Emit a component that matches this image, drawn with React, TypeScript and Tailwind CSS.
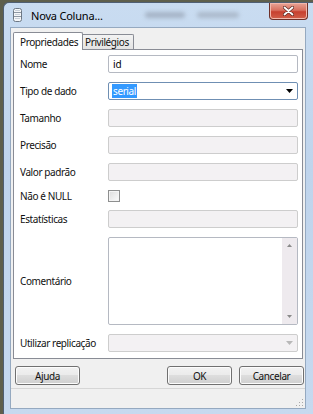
import React from "react"

const font = { fontFamily: '"Noto Sans", "Open Sans", sans-serif' }

const Label = ({ children }: { children: React.ReactNode }) => (
  <div className="w-[88px] shrink-0 text-[10px] tracking-[-0.4px] text-[#111] leading-none">{children}</div>
)

const Disabled = ({ arrow }: { arrow?: boolean }) => (
  <div className="flex-1 h-[18px] rounded-[2px] border border-[#cdcdcd] bg-[#f3f1f3] flex items-center justify-end pr-[4px]">
    {arrow && (
      <svg width="7" height="4" viewBox="0 0 7 4">
        <path d="M0 0h7L3.5 4z" fill="#b8b8b8" />
      </svg>
    )}
  </div>
)

const Row = ({ label, children, h = "h-[18px]" }: { label: string; children: React.ReactNode; h?: string }) => (
  <div className={`flex items-center ${h}`}>
    <Label>{label}</Label>
    {children}
  </div>
)

const WinButton = ({ children }: { children: React.ReactNode }) => (
  <button className="w-[65px] h-[19px] rounded-[3px] border border-[#707070] bg-[linear-gradient(#f2f2f2,#ebebeb_45%,#dddddd_50%,#cfcfcf)] text-[10px] tracking-[-0.4px] text-[#111] leading-none shadow-[inset_0_0_0_1px_#fcfcfc]">
    {children}
  </button>
)

export default function App() {
  return (
    <div className="w-[313px] h-[414px] overflow-hidden bg-[#5e5f4c]" style={font}>
      <div className="ml-[3px] mt-[2px] w-[311px] h-[413px] rounded-tl-[6px] border-l border-t border-[#4f5f74] bg-[linear-gradient(#c9dcf1,#bfd4ec_40%,#c6d9ef)] flex flex-col">
        {/* title bar */}
        <div className="relative h-[24px] flex items-start shrink-0">
          <div className="flex items-center h-[22px] pl-[9px] pt-[2px] gap-[9px]">
            <svg width="9" height="14" viewBox="0 0 9 14">
              <rect x="0.5" y="0.5" width="8" height="13" rx="2" fill="#f4f6f8" stroke="#6d7885" />
              <path d="M1 4.5h7M1 8.5h7" stroke="#8d97a3" />
              <rect x="2" y="2" width="5" height="1" fill="#c9d1da" />
              <rect x="2" y="6" width="5" height="1" fill="#c9d1da" />
              <rect x="2" y="10" width="5" height="1" fill="#c9d1da" />
            </svg>
            <span className="text-[11px] tracking-[-0.2px] text-black leading-none">Nova Coluna...</span>
          </div>
          <div className="flex gap-[12px] mt-[9px] ml-[42px] opacity-60 blur-[2px]">
            <span className="w-[40px] h-[6px] rounded-full bg-[#8d98a8]" />
            <span className="w-[42px] h-[6px] rounded-full bg-[#98a3b2]" />
          </div>
          <div className="ml-auto mr-[6px] w-[39px] h-[17px] rounded-b-[4px] border border-t-0 border-[#6e3028] bg-[linear-gradient(#e9a597,#d8705f_45%,#c7402f_55%,#d1604a)] flex items-center justify-center shadow-[inset_0_0_0_1px_#f2b8ac]">
            <svg width="11" height="10" viewBox="0 0 11 10">
              <path d="M1.5 1.5l8 7M9.5 1.5l-8 7" stroke="#5a2a24" strokeWidth="3.2" strokeLinecap="round" />
              <path d="M1.5 1.5l8 7M9.5 1.5l-8 7" stroke="#ffffff" strokeWidth="1.8" strokeLinecap="round" />
            </svg>
          </div>
        </div>

        {/* client area */}
        <div className="ml-[6px] w-[296px] h-[382px] border border-[#95a9c0] bg-[#f0f0f0] flex flex-col">
          <div className="pl-[2px] pt-[3px]">
            {/* tabs */}
            <div className="flex items-end h-[18px] relative z-10">
              <div className="w-[70px] h-[18px] -mb-px border border-b-0 border-[#898c95] bg-white rounded-t-[2px] flex items-center pl-[6px] text-[10px] tracking-[-0.4px] leading-none text-[#111]">
                Propriedades
              </div>
              <div className="w-[51px] h-[15px] border border-l-0 border-b-0 border-[#898c95] bg-[linear-gradient(#f3f3f3,#e3e3e3)] rounded-tr-[2px] flex items-center pl-[2px] text-[10px] tracking-[-0.4px] leading-none text-[#111]">
                Privilégios
              </div>
            </div>
            {/* panel */}
            <div className="w-[290px] h-[310px] border border-[#898c95] bg-white pl-[6px] pr-[4px] pt-[5px] flex flex-col gap-[9px]">
              <Row label="Nome">
                <div className="flex-1 h-[18px] rounded-[2px] border border-[#b5b9c2] bg-white flex items-center pl-[4px] text-[10px] leading-none text-black">
                  id
                </div>
              </Row>
              <Row label="Tipo de dado">
                <div className="flex-1 h-[18px] rounded-[2px] border border-[#6f8fb3] bg-white flex items-center pl-[3px] pr-[4px]">
                  <span className="bg-[#3399ff] text-white text-[10px] tracking-[-0.4px] leading-none px-[1px] py-[2px]">serial</span>
                  <svg className="ml-auto" width="7" height="4" viewBox="0 0 7 4">
                    <path d="M0 0h7L3.5 4z" fill="#000" />
                  </svg>
                </div>
              </Row>
              <Row label="Tamanho">
                <Disabled />
              </Row>
              <Row label="Precisão">
                <Disabled />
              </Row>
              <Row label="Valor padrão">
                <Disabled />
              </Row>
              <Row label="Não é NULL" h="h-[11px]">
                <div className="w-[12px] h-[12px] border border-[#8e8f8f] bg-[linear-gradient(135deg,#dcdcdc,#fbfbfb)] shadow-[inset_0_0_0_1px_#f4f4f4]" />
              </Row>
              <Row label="Estatísticas">
                <Disabled />
              </Row>
              <Row label="Comentário" h="h-[88px]">
                <div className="flex-1 h-[88px] rounded-[2px] border border-[#b5b9c2] bg-white flex justify-end">
                  <div className="w-[15px] h-full bg-[#eeeaee] flex flex-col items-center justify-between py-[6px]">
                    <svg width="5" height="3" viewBox="0 0 5 3">
                      <path d="M0 3h5L2.5 0z" fill="#8a8a8a" />
                    </svg>
                    <svg width="5" height="3" viewBox="0 0 5 3">
                      <path d="M0 0h5L2.5 3z" fill="#8a8a8a" />
                    </svg>
                  </div>
                </div>
              </Row>
              <Row label="Utilizar replicação">
                <Disabled arrow />
              </Row>
            </div>
          </div>

          {/* buttons */}
          <div className="flex items-center pl-[4px] pr-[1px] mt-[7px]">
            <WinButton>Ajuda</WinButton>
            <div className="ml-auto flex gap-[7px]">
              <WinButton>OK</WinButton>
              <WinButton>Cancelar</WinButton>
            </div>
          </div>

          {/* status bar */}
          <div className="mt-[3px] flex-1 border-t border-[#d6d6d6] flex items-end justify-end pr-[1px] pb-[1px]">
            <svg width="8" height="8" viewBox="0 0 8 8">
              <rect x="6" y="0" width="1" height="1" fill="#a8a8a8" />
              <rect x="6" y="3" width="1" height="1" fill="#a8a8a8" />
              <rect x="3" y="3" width="1" height="1" fill="#a8a8a8" />
              <rect x="6" y="6" width="1" height="1" fill="#a8a8a8" />
              <rect x="3" y="6" width="1" height="1" fill="#a8a8a8" />
              <rect x="0" y="6" width="1" height="1" fill="#a8a8a8" />
            </svg>
          </div>
        </div>
      </div>
    </div>
  )
}
